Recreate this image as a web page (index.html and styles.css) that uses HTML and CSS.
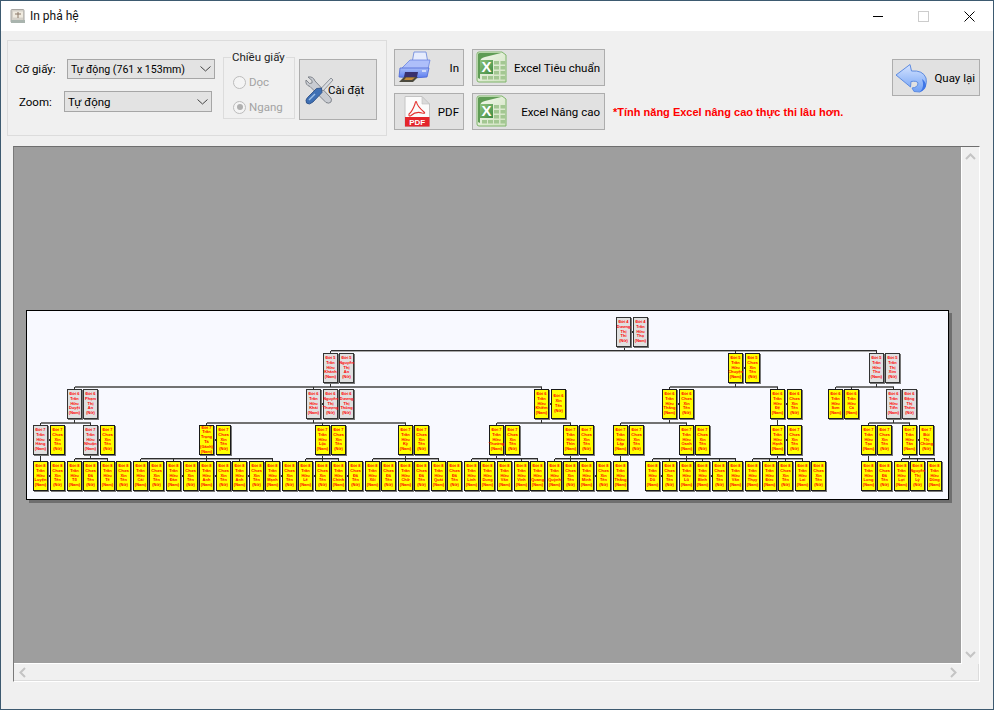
FILE: index.html
```html
<!DOCTYPE html>
<html lang="vi">
<head>
<meta charset="utf-8">
<title>In phả hệ</title>
<link rel="stylesheet" href="styles.css">
</head>
<body>
<svg class="defs" width="0" height="0">
<defs>
<linearGradient id="xl" x1="0" y1="0" x2="1" y2="1"><stop offset="0" stop-color="#f2f7ec"/><stop offset="1" stop-color="#cfe2bf"/></linearGradient>
<linearGradient id="xg" x1="0" y1="0" x2="1" y2="1"><stop offset="0" stop-color="#8cc27c"/><stop offset="1" stop-color="#3f8a42"/></linearGradient>
<linearGradient id="ar" x1="0" y1="0" x2="0" y2="1"><stop offset="0" stop-color="#d6e4ff"/><stop offset="1" stop-color="#6fa0f5"/></linearGradient>
<linearGradient id="pr" x1="0" y1="0" x2="0" y2="1"><stop offset="0" stop-color="#a7bcf8"/><stop offset="1" stop-color="#5a7cf0"/></linearGradient>
<symbol id="excel" viewBox="0 0 32 33">
<path d="M3 1H26L30 4V31H3Q1 31 1 29V3Q1 1 3 1Z" fill="url(#xl)" stroke="#7fb56b"/>
<path d="M2 3Q2 2 4 2H25L9 6Q4 7 4 11V28L2 27Z" fill="#5f9c55"/>
<rect x="4" y="9" width="13" height="14" fill="url(#xg)"/>
<text x="10.5" y="21" class="xl-x">X</text>
<g fill="#a3c792"><rect x="18" y="10" width="5" height="3.5"/><rect x="24.500" y="10" width="5" height="3.500"/><rect x="18" y="15" width="5" height="3.500"/><rect x="24.500" y="15" width="5" height="3.500"/><rect x="18" y="20" width="5" height="3.500"/><rect x="24.500" y="20" width="5" height="3.500"/><rect x="6" y="25" width="5" height="3.500"/><rect x="12" y="25" width="5" height="3.500"/><rect x="18" y="25" width="5" height="3.500"/><rect x="24.500" y="25" width="5" height="3.500"/></g>
</symbol>
</defs>
</svg>
<div class="window">
  <header class="titlebar">
    <svg class="app-icon" viewBox="0 0 16 16" width="16" height="16"><rect x="1" y="1.500" width="13" height="13" rx="1" fill="#d4d0c8" stroke="#a8a6a2"/><rect x="3" y="3.500" width="10" height="6" fill="#efeadf"/><path d="M8 4V10M5 6H11" stroke="#8b7868"/><path d="M1 12H15V15H1Z" fill="#a9b4ae"/></svg>
    <span class="title">In phả hệ</span>
    <div class="winbtns">
      <svg width="10" height="10" viewBox="0 0 10 10" class="wb wb-min"><path d="M0 5.500H10" stroke="#000"/></svg>
      <svg width="11" height="11" viewBox="0 0 11 11" class="wb wb-max"><rect x=".5" y=".5" width="10" height="10" fill="none" stroke="#ccc"/></svg>
      <svg width="11" height="11" viewBox="0 0 11 11" class="wb wb-close"><path d="M.5 .5L10.500 10.500M10.500 .5L.5 10.500" stroke="#000" fill="none"/></svg>
    </div>
  </header>

  <section class="toolbar">
    <div class="panel">
      <div class="fields">
        <div class="field field-size"><label class="flabel">Cỡ giấy:</label><div class="combo"><span class="combo-size-text">Tự động (761 x 153mm)</span><svg class="chev" width="11" height="6" viewBox="0 0 11 6"><path d="M.5 .5L5.500 5L10.500 .5" fill="none" stroke="#444"/></svg></div></div>
        <div class="field field-zoom"><label class="flabel">Zoom:</label><div class="combo combo-zoom"><span>Tự động</span><svg class="chev" width="11" height="6" viewBox="0 0 11 6"><path d="M.5 .5L5.500 5L10.500 .5" fill="none" stroke="#444"/></svg></div></div>
      </div>
      <div class="groupbox">
        <span class="legend">Chiều giấy</span>
        <div class="radio r-doc"><i class="dot"></i>Dọc</div>
        <div class="radio r-ngang"><i class="dot on"></i>Ngang</div>
      </div>
      <button class="btn btn-setup">
        <svg class="ico-tools" width="30" height="30" viewBox="0 0 30 30">
          <path d="M4 2L8 5.500L8 8L5.500 8.500L2 5Q1 10 6 11.500L22 27.500Q25 29 27 27Q28.500 24 26 22L11 6Q9 1 4 2Z" fill="#c9ccd2" stroke="#6d727a" stroke-width=".8"/>
          <path d="M27 3L29 5L19 16L16.500 14Z" fill="#d9dce0" stroke="#7a7f86" stroke-width=".8"/>
          <path d="M17.500 13L18 17.500L9 27Q5 30.500 2.500 28Q1 25 3.500 22.500L12.500 13.500Z" fill="#3f70b4" stroke="#274a80" stroke-width=".8"/>
          <path d="M5 25L11 19" stroke="#9cbfe8" stroke-width="1.400"/>
        </svg>
        <span class="setup-text">Cài đặt</span>
      </button>
    </div>

    <div class="actions">
      <button class="btn btn-act">
        <svg class="ico-printer" width="34" height="34" viewBox="0 0 34 34">
          <path d="M16 1H28L30 12H14Z" fill="#e6ecfd" stroke="#7f97e0"/>
          <path d="M5 16L12 9H32L30 18H3Z" fill="#aebffa" stroke="#6a84e0" stroke-width=".8"/>
          <path d="M2 17H31L29 26Q15 28 1 26Z" fill="url(#pr)" stroke="#4a66d4" stroke-width=".8"/>
          <path d="M7 21H20L19 26H6Z" fill="#39306e"/>
          <path d="M6 26H20L15 31H1Z" fill="#4c4a3e"/>
          <path d="M8 26.500H17L14 29H6Z" fill="#c58a3a"/>
          <path d="M24 20H28" stroke="#e6ecfd" stroke-width="1.500"/>
        </svg>
        <span class="lbl">In</span>
      </button>
      <button class="btn btn-act">
        <svg class="ico-excel" width="32" height="33"><use href="#excel"/></svg>
        <span class="lbl">Excel Tiêu chuẩn</span>
      </button>
      <button class="btn btn-act">
        <svg class="ico-pdf" width="26" height="31" viewBox="0 0 26 31">
          <path d="M1 .5H18L25.500 8V30.500H1Z" fill="#fbfbfb" stroke="#c4c4c4"/>
          <path d="M18 .5V8H25.500Z" fill="#dadada" stroke="#bdbdbd" stroke-width=".6"/>
          <path d="M5 18Q8 16 11 8Q11.500 4.500 12.500 6Q13 10 20 16Q22 18 18 17Q12 15 7 19.500Q4.500 21 5 18Z" fill="none" stroke="#e3322f" stroke-width="1.100"/>
          <rect x="1" y="21" width="24.500" height="9.500" fill="#e4252b"/>
          <text x="13.200" y="29" class="pdf-t">PDF</text>
        </svg>
        <span class="lbl">PDF</span>
      </button>
      <button class="btn btn-act">
        <svg class="ico-excel" width="32" height="33"><use href="#excel"/></svg>
        <span class="lbl">Excel Nâng cao</span>
      </button>
    </div>

    <p class="note">*Tính năng Excel nâng cao thực thi lâu hơn.</p>

    <button class="btn btn-back">
      <svg class="ico-back" width="33" height="30" viewBox="0 0 33 30">
        <path d="M1 12L15 1.500L16.500 8Q28 7 31 15Q33 24 25 29L19 28.500L17 25Q23 24.500 23 20Q22 17.500 16 18.500L15.500 24Z" fill="url(#ar)" stroke="#5f8ce0"/>
        <path d="M25 29Q30 24 27 16Q31 19 31 23Q30 27 25 29Z" fill="#3f76e6"/>
      </svg>
      <span class="lbl">Quay lại</span>
    </button>
  </section>

  <section class="viewer">
    <div class="stage">
      <div class="paper">
        <svg class="lines" width="921" height="188" viewBox="0 0 921 188">
          <path class="bus-shadow" d="M303.500 40.500H849.500M47.500 148.500H80.500M113.500 148.500H245.500M278.500 148.500H311.500M345.500 148.500H411.500M444.500 148.500H510.500M527.500 148.500H559.500M625.500 148.500H708.500M725.500 148.500H775.500M874.500 148.500H907.500"/>
          <path class="bus-soft" d="M47.500 76H514.500M642.500 76H750.500M808.500 76H866.500M13.500 112H63.500M179.500 112H378.500M469.500 112H543.500M593.500 112H659.500M841.500 112H882.500"/>
          <path class="bus" d="M597.500 36V39.500M303.500 39.500H849.500M303.500 39.500V42M708.500 39.500V42M849.500 39.500V42
          M303.500 72V75.500M47.500 75.500V78M286.500 75.500V78M514.500 75.500V78
          M708.500 72V75.500M642.500 75.500V78M750.500 75.500V78
          M849.500 72V75.500M808.500 75.500V78M824.500 75.500V78M866.500 75.500V78
          M47.500 108V111.500M13.500 111.500V114M63.500 111.500V114
          M286.500 108V111.500M179.500 111.500V114M295.500 111.500V114M378.500 111.500V114
          M514.500 108V111.500M469.500 111.500V114M543.500 111.500V114
          M642.500 108V111.500M593.500 111.500V114M659.500 111.500V114
          M750.500 108V114
          M866.500 108V111.500M841.500 111.500V114M882.500 111.500V114
          M13.500 144V150
          M63.500 144V147.500M47.500 147.500H80.500M47.500 147.500V150M80.500 147.500V150
          M179.500 144V147.500M113.500 147.500H245.500M113.500 147.500V150M146.500 147.500V150M179.500 147.500V150M212.500 147.500V150M245.500 147.500V150
          M295.500 144V147.500M278.500 147.500H311.500M278.500 147.500V150M295.500 147.500V150M311.500 147.500V150
          M378.500 144V147.500M345.500 147.500H411.500M345.500 147.500V150M378.500 147.500V150M411.500 147.500V150
          M469.500 144V147.500M444.500 147.500H510.500M444.500 147.500V150M460.500 147.500V150M477.500 147.500V150M494.500 147.500V150M510.500 147.500V150
          M543.500 144V147.500M527.500 147.500H559.500M527.500 147.500V150M543.500 147.500V150M559.500 147.500V150
          M593.500 144V150
          M659.500 144V147.500M625.500 147.500H708.500M625.500 147.500V150M642.500 147.500V150M659.500 147.500V150M675.500 147.500V150M692.500 147.500V150M708.500 147.500V150
          M750.500 144V147.500M725.500 147.500H775.500M725.500 147.500V150M742.500 147.500V150M758.500 147.500V150M775.500 147.500V150
          M841.500 144V150
          M882.500 144V147.500M874.500 147.500H907.500M874.500 147.500V150M890.500 147.500V150M907.500 147.500V150"/>
          <path class="tie" d="M604 21H606
          M311 57H312M716 57H718M857 57H858
          M55 93H56M294 93H296M311 93H312M522 93H524M650 93H652M758 93H760M874 93H875
          M21 129H23M71 129H73M187 129H189M303 129H304M386 129H387M477 129H478M551 129H552M601 129H602M667 129H668M758 129H760M849 129H850M890 129H892
          M21 165H23M55 165H56M88 165H89M121 165H122M154 165H156M187 165H189M220 165H222M253 165H255M286 165H288M319 165H321M353 165H354M386 165H387M419 165H420M535 165H536M567 165H569M633 165H635M683 165H685M750 165H751M783 165H784M849 165H850M882 165H883"/>
        </svg>
        <div class="n g r0" style="left:589px">Đời 4<br>Dương<br>Thị<br>Thi<br>(Nữ)</div>
        <div class="n g r0" style="left:606px">Đời 4<br>Trần<br>Hữu<br>Thọ<br>(Nam)</div>

        <div class="n g r1" style="left:296px">Đời 5<br>Trần<br>Hữu<br>Khánh<br>(Nam)</div>
        <div class="n g r1" style="left:312px">Đời 5<br>Nguyễn<br>Thị<br>An<br>(Nữ)</div>
        <div class="n y r1" style="left:701px">Đời 5<br>Trần<br>Hữu<br>Chuyện<br>(Nam)</div>
        <div class="n y r1" style="left:718px">Đời 5<br>Chưa<br>Xin<br>Tên<br>(Nữ)</div>
        <div class="n g r1" style="left:842px">Đời 5<br>Trần<br>Hữu<br>Thu<br>(Nam)</div>
        <div class="n g r1" style="left:858px">Đời 5<br>Trần<br>Thị<br>Xim<br>(Nữ)</div>

        <div class="n g r2" style="left:40px">Đời 6<br>Trần<br>Hữu<br>Duyệt<br>(Nam)</div>
        <div class="n g r2" style="left:56px">Đời 6<br>Phạm<br>Thị<br>An<br>(Nữ)</div>
        <div class="n g r2" style="left:279px">Đời 6<br>Trần<br>Hữu<br>Khải<br>(Nam)</div>
        <div class="n g r2" style="left:296px">Đời 6<br>Nguyễn<br>Thị<br>Thượng<br>(Nữ)</div>
        <div class="n g r2" style="left:312px">Đời 6<br>Dương<br>Thị<br>Thông<br>(Nữ)</div>
        <div class="n y r2" style="left:507px">Đời 6<br>Trần<br>Hữu<br>Khiêm<br>(Nam)</div>
        <div class="n y r2" style="left:524px">Đời 6<br>Xin<br>Tên<br>(Nữ)</div>
        <div class="n y r2" style="left:635px">Đời 6<br>Trần<br>Hữu<br>Thắng<br>(Nam)</div>
        <div class="n y r2" style="left:652px">Đời 6<br>Chưa<br>Xin<br>Tên<br>(Nữ)</div>
        <div class="n y r2" style="left:743px">Đời 6<br>Trần<br>Hữu<br>Đệ<br>(Nam)</div>
        <div class="n y r2" style="left:760px">Đời 6<br>Chưa<br>Xin<br>Tên<br>(Nữ)</div>
        <div class="n y r2" style="left:801px">Đời 6<br>Trần<br>Hữu<br>Sơn<br>(Nam)</div>
        <div class="n y r2" style="left:817px">Đời 6<br>Trần<br>Hữu<br>Cả<br>(Nam)</div>
        <div class="n g r2" style="left:859px">Đời 6<br>Trần<br>Hữu<br>Tiến<br>(Nam)</div>
        <div class="n g r2" style="left:875px">Đời 6<br>Đặng<br>Thị<br>Thêm<br>(Nữ)</div>

        <div class="n g r3" style="left:6px">Đời 7<br>Trần<br>Hữu<br>Hàng<br>(Nam)</div>
        <div class="n y r3" style="left:23px">Đời 7<br>Chưa<br>Xin<br>Tên<br>(Nữ)</div>
        <div class="n g r3" style="left:56px">Đời 7<br>Trần<br>Hữu<br>Nhuận<br>(Nam)</div>
        <div class="n y r3" style="left:73px">Đời 7<br>Chưa<br>Xin<br>Tên<br>(Nữ)</div>
        <div class="n y r3" style="left:172px">Đời 7<br>Trần<br>Trọng<br>Tá<br>(Gánh)<br>(Nam)</div>
        <div class="n y r3" style="left:189px">Đời 7<br>Chưa<br>Xin<br>Tên<br>(Nữ)</div>
        <div class="n y r3" style="left:288px">Đời 7<br>Trần<br>Hữu<br>Lộc<br>(Nam)</div>
        <div class="n y r3" style="left:304px">Đời 7<br>Chưa<br>Xin<br>Tên<br>(Nữ)</div>
        <div class="n y r3" style="left:371px">Đời 7<br>Trần<br>Hữu<br>Kỳ<br>(Nam)</div>
        <div class="n y r3" style="left:387px">Đời 7<br>Chưa<br>Xin<br>Tên<br>(Nữ)</div>
        <div class="n y r3" style="left:462px">Đời 7<br>Trần<br>Hữu<br>Thưởng<br>(Nam)</div>
        <div class="n y r3" style="left:478px">Đời 7<br>Chưa<br>Xin<br>Tên<br>(Nữ)</div>
        <div class="n y r3" style="left:536px">Đời 7<br>Trần<br>Hữu<br>Thìn<br>(Nam)</div>
        <div class="n y r3" style="left:552px">Đời 7<br>Chưa<br>Xin<br>Tên<br>(Nữ)</div>
        <div class="n y r3" style="left:586px">Đời 7<br>Trần<br>Hữu<br>Lập<br>(Nam)</div>
        <div class="n y r3" style="left:602px">Đời 7<br>Chưa<br>Xin<br>Tên<br>(Nữ)</div>
        <div class="n y r3" style="left:652px">Đời 7<br>Trần<br>Hữu<br>Oanh<br>(Nam)</div>
        <div class="n y r3" style="left:668px">Đời 7<br>Chưa<br>Xin<br>Tên<br>(Nữ)</div>
        <div class="n y r3" style="left:743px">Đời 7<br>Trần<br>Hữu<br>Hạnh<br>(Nam)</div>
        <div class="n y r3" style="left:760px">Đời 7<br>Chưa<br>Xin<br>Tên<br>(Nữ)</div>
        <div class="n y r3" style="left:834px">Đời 7<br>Trần<br>Hữu<br>Tạo<br>(Nam)</div>
        <div class="n y r3" style="left:850px">Đời 7<br>Chưa<br>Xin<br>Tên<br>(Nữ)</div>
        <div class="n y r3" style="left:875px">Đời 7<br>Trần<br>Hữu<br>Tân<br>(Nam)</div>
        <div class="n y r3" style="left:892px">Đời 7<br>Bùi<br>Thị<br>Chúng<br>(Nữ)</div>

        <div class="n y r4" style="left:6px">Đời 8<br>Trần<br>Hữu<br>Luyện<br>(Nam)</div>
        <div class="n y r4" style="left:23px">Đời 8<br>Chưa<br>Xin<br>Tên<br>(Nữ)</div>
        <div class="n y r4" style="left:40px">Đời 8<br>Trần<br>Hữu<br>Tố<br>(Nam)</div>
        <div class="n y r4" style="left:56px">Đời 8<br>Chưa<br>Đã<br>Tên<br>(Nữ)</div>
        <div class="n y r4" style="left:73px">Đời 8<br>Trần<br>Hữu<br>Tê<br>(Nam)</div>
        <div class="n y r4" style="left:89px">Đời 8<br>Chưa<br>Xin<br>Tên<br>(Nữ)</div>
        <div class="n y r4" style="left:106px">Đời 8<br>Trần<br>Hữu<br>Cải<br>(Nam)</div>
        <div class="n y r4" style="left:122px">Đời 8<br>Chưa<br>Xin<br>Tên<br>(Nữ)</div>
        <div class="n y r4" style="left:139px">Đời 8<br>Trần<br>Hữu<br>Đàn<br>(Nam)</div>
        <div class="n y r4" style="left:156px">Đời 8<br>Chưa<br>Xin<br>Tên<br>(Nữ)</div>
        <div class="n y r4" style="left:172px">Đời 8<br>Trần<br>Hữu<br>Anh<br>(Nam)</div>
        <div class="n y r4" style="left:189px">Đời 8<br>Chưa<br>Xin<br>Tên<br>(Nữ)</div>
        <div class="n y r4" style="left:205px">Đời 8<br>Trần<br>Hữu<br>Anh<br>(Nam)</div>
        <div class="n y r4" style="left:222px">Đời 8<br>Chưa<br>Xin<br>Tên<br>(Nữ)</div>
        <div class="n y r4" style="left:238px">Đời 8<br>Trần<br>Hữu<br>Mạnh<br>(Nam)</div>
        <div class="n y r4" style="left:255px">Đời 8<br>Chưa<br>Xin<br>Tên<br>(Nữ)</div>
        <div class="n y r4" style="left:271px">Đời 8<br>Trần<br>Hữu<br>Lê<br>(Nam)</div>
        <div class="n y r4" style="left:288px">Đời 8<br>Chưa<br>Xin<br>Tên<br>(Nữ)</div>
        <div class="n y r4" style="left:304px">Đời 8<br>Trần<br>Hữu<br>Chính<br>(Nam)</div>
        <div class="n y r4" style="left:321px">Đời 8<br>Chưa<br>Đã<br>Tên<br>(Nữ)</div>
        <div class="n y r4" style="left:338px">Đời 8<br>Trần<br>Hữu<br>Xồi<br>(Nam)</div>
        <div class="n y r4" style="left:354px">Đời 8<br>Chưa<br>Đã<br>Tên<br>(Nữ)</div>
        <div class="n y r4" style="left:371px">Đời 8<br>Trần<br>Hữu<br>Chữ<br>(Nam)</div>
        <div class="n y r4" style="left:387px">Đời 8<br>Chưa<br>Đã<br>Tên<br>(Nữ)</div>
        <div class="n y r4" style="left:404px">Đời 8<br>Trần<br>Hữu<br>Quát<br>(Nam)</div>
        <div class="n y r4" style="left:420px">Đời 8<br>Chưa<br>Đã<br>Tên<br>(Nữ)</div>
        <div class="n y r4" style="left:437px">Đời 8<br>Trần<br>Hữu<br>Linh<br>(Nam)</div>
        <div class="n y r4" style="left:453px">Đời 8<br>Trần<br>Hữu<br>Dung<br>(Nam)</div>
        <div class="n y r4" style="left:470px">Đời 8<br>Trần<br>Hữu<br>Vân<br>(Nam)</div>
        <div class="n y r4" style="left:487px">Đời 8<br>Trần<br>Hữu<br>Vinh<br>(Nam)</div>
        <div class="n y r4" style="left:503px">Đời 8<br>Trần<br>Hữu<br>Quang<br>(Nam)</div>
        <div class="n y r4" style="left:520px">Đời 8<br>Trần<br>Hữu<br>Quỳnh<br>(Nam)</div>
        <div class="n y r4" style="left:536px">Đời 8<br>Chưa<br>Xin<br>Tên<br>(Nữ)</div>
        <div class="n y r4" style="left:552px">Đời 8<br>Trần<br>Hữu<br>Minh<br>(Nam)</div>
        <div class="n y r4" style="left:569px">Đời 8<br>Chưa<br>Xin<br>Tên<br>(Nữ)</div>
        <div class="n y r4" style="left:586px">Đời 8<br>Trần<br>Hữu<br>Thắng<br>(Nam)</div>
        <div class="n y r4" style="left:618px">Đời 8<br>Trần<br>Hữu<br>Dũ<br>(Nam)</div>
        <div class="n y r4" style="left:635px">Đời 8<br>Chưa<br>Xin<br>Tên<br>(Nữ)</div>
        <div class="n y r4" style="left:652px">Đời 8<br>Trần<br>Hữu<br>Lũ<br>(Nam)</div>
        <div class="n y r4" style="left:668px">Đời 8<br>Trần<br>Hữu<br>Bình<br>(Nam)</div>
        <div class="n y r4" style="left:685px">Đời 8<br>Chưa<br>Xin<br>Tên<br>(Nữ)</div>
        <div class="n y r4" style="left:701px">Đời 8<br>Trần<br>Hữu<br>Văn<br>(Nam)</div>
        <div class="n y r4" style="left:718px">Đời 8<br>Trần<br>Hữu<br>Thụy<br>(Nam)</div>
        <div class="n y r4" style="left:735px">Đời 8<br>Trần<br>Hữu<br>Đức<br>(Nam)</div>
        <div class="n y r4" style="left:751px">Đời 8<br>Chưa<br>Xin<br>Tên<br>(Nữ)</div>
        <div class="n y r4" style="left:768px">Đời 8<br>Trần<br>Hữu<br>Lai<br>(Nam)</div>
        <div class="n y r4" style="left:784px">Đời 8<br>Chưa<br>Xin<br>Tên<br>(Nữ)</div>
        <div class="n y r4" style="left:834px">Đời 8<br>Trần<br>Hữu<br>Long<br>(Nam)</div>
        <div class="n y r4" style="left:850px">Đời 8<br>Chưa<br>Đã<br>Tên<br>(Nữ)</div>
        <div class="n y r4" style="left:867px">Đời 8<br>Trần<br>Hữu<br>Lợi<br>(Nam)</div>
        <div class="n y r4" style="left:883px">Đời 8<br>Nguyễn<br>Thị<br>Lý<br>(Nữ)</div>
        <div class="n y r4" style="left:900px">Đời 8<br>Trần<br>Hữu<br>Dũng<br>(Nam)</div>
      </div>
    </div>
    <div class="vbar">
      <svg width="11" height="7" viewBox="0 0 11 7"><path d="M1 6L5.500 1.500L10 6" fill="none" stroke="#c4c4c4" stroke-width="2"/></svg>
      <svg width="11" height="7" viewBox="0 0 11 7"><path d="M1 1L5.500 5.500L10 1" fill="none" stroke="#c4c4c4" stroke-width="2"/></svg>
    </div>
    <div class="hbar">
      <svg width="7" height="11" viewBox="0 0 7 11"><path d="M6 1L1.500 5.500L6 10" fill="none" stroke="#c4c4c4" stroke-width="2"/></svg>
      <svg width="7" height="11" viewBox="0 0 7 11"><path d="M1 1L5.500 5.500L1 10" fill="none" stroke="#c4c4c4" stroke-width="2"/></svg>
    </div>
    <div class="corner"></div>
  </section>
</div>
</body>
</html>
```
FILE: styles.css
```css
* { box-sizing: border-box; }
html, body { margin: 0; padding: 0; }
body { width: 994px; height: 710px; overflow: hidden; font-family: Roboto, "Noto Sans", sans-serif; font-size: 11.5px; color: #000; }
.defs { position: absolute; }
.window { width: 994px; height: 710px; border: 1px solid #3d5a70; background: #f0f0f0; display: flex; flex-direction: column; }

.titlebar { height: 30px; background: #fff; display: flex; align-items: center; padding-left: 9px; flex: none; }
.app-icon { flex: none; }
.title { margin-left: 4px; color: #111; font-size: 12px; }
.winbtns { margin-left: auto; display: flex; align-items: center; }
.wb { flex: none; display: block; }
.wb-min { margin-right: 35px; }
.wb-max { margin-right: 35px; }
.wb-close { margin-right: 18px; }

.toolbar { height: 115px; flex: none; display: flex; align-items: flex-start; padding: 9px 0 0 6px; }
.panel { width: 380px; height: 96px; border: 1px solid #dcdcdc; display: flex; flex: none; }
.fields { width: 207px; flex: none; padding-top: 18px; display: flex; flex-direction: column; gap: 12px; }
.field { display: flex; align-items: center; }
.field-size { margin-left: 7px; }
.field-zoom { margin-left: 11px; }
.field-size .flabel { width: 52px; }
.field-zoom .flabel { width: 45px; }
.combo { width: 148px; height: 20px; background: #e3e3e3; border: 1px solid #a6a6a6; display: flex; align-items: center; justify-content: space-between; padding: 0 3px 0 3px; white-space: nowrap; }
.combo-size-text { font-size: 10.6px; }
.combo-zoom { height: 21px; }
.chev { flex: none; }

.groupbox { position: relative; width: 72px; height: 62px; margin: 16px 0 0 8px; border: 1px solid #dcdcdc; flex: none; }
.legend { position: absolute; left: 7px; top: -8px; background: #f0f0f0; padding: 0 1px; white-space: nowrap; color: #222; }
.radio { display: flex; align-items: center; color: #a3a3a3; gap: 3px; padding-left: 9px; }
.r-doc { margin-top: 17px; }
.r-ngang { margin-top: 11px; }
.dot { width: 13px; height: 13px; border-radius: 50%; border: 1px solid #bcbcbc; background: #f4f4f4; display: block; position: relative; flex: none; }
.dot.on::after { content: ""; position: absolute; left: 2.5px; top: 2.5px; width: 6px; height: 6px; border-radius: 50%; background: #b0b0b0; }

.btn { font: inherit; color: #000; background: #e1e1e1; border: 1px solid #adadad; display: flex; align-items: center; padding: 0; }
.btn-setup { width: 78px; height: 61px; margin: 18px 0 0 4px; flex: none; padding-left: 4px; }
.ico-tools { flex: none; }
.setup-text { margin-left: -6px; }

.actions { display: grid; grid-template-columns: 70px 133px; grid-auto-rows: 37px; gap: 7px 8px; margin: 9px 0 0 7px; flex: none; }
.btn-act { justify-content: space-between; padding: 0 4px 0 3px; }
.lbl { white-space: nowrap; }
.ico-printer { flex: none; }
.ico-excel { flex: none; }
.ico-pdf { margin-left: 6px; flex: none; }
.xl-x { font: bold 15px "Liberation Sans", sans-serif; fill: #fff; text-anchor: middle; }
.pdf-t { font: bold 8px "Liberation Sans", sans-serif; fill: #fff; text-anchor: middle; }

.note { margin: 66px 0 0 8px; font: bold 11px/13px "Liberation Sans", sans-serif; color: #f00; white-space: nowrap; }
.btn-back { width: 88px; height: 37px; margin: 19px 13px 0 auto; flex: none; justify-content: space-between; padding: 0 4px 0 2px; }
.ico-back { flex: none; }

.viewer { flex: 1; margin: 0 13px 27px 12px; display: grid; grid-template-columns: 1fr 17px; grid-template-rows: 1fr 17px; border-top: 1px solid #6e6e6e; border-left: 1px solid #7a7a7a; border-right: 1px solid #fff; border-bottom: 1px solid #fff; min-height: 0; }
.stage { background: #9e9e9e; border-right: 1px solid #fff; border-bottom: 1px solid #fff; display: flex; align-items: center; padding-left: 12px; min-width: 0; min-height: 0; overflow: hidden; }
.paper { position: relative; width: 923px; height: 190px; flex: none; background: #f8f9ff; border: 1px solid #000; box-shadow: 3px 3px 0 #6e6e6e; }
.lines { position: absolute; left: 0; top: 0; }
.bus { fill: none; stroke: #2e2e2e; stroke-width: 1; shape-rendering: crispEdges; }
.bus-soft { fill: none; stroke: #727272; stroke-width: 2; shape-rendering: crispEdges; }
.bus-shadow { fill: none; stroke: #a8a8a8; stroke-width: 1; shape-rendering: crispEdges; }
.tie { fill: none; stroke: #333; stroke-width: 2; shape-rendering: crispEdges; }
.vbar { display: flex; flex-direction: column; justify-content: space-between; align-items: center; padding: 6px 0 6px; background: #f0f0f0; }
.hbar { display: flex; justify-content: space-between; align-items: center; padding: 0 5px 0 5px; background: #f0f0f0; border-bottom: 1px solid #dcdcdc; }
.corner { background: #f0f0f0; border-bottom: 1px solid #dcdcdc; border-right: 1px solid #dcdcdc; }

.n { position: absolute; width: 15px; height: 30px; border: 1px solid #1a1a1a; box-shadow: 1px 1px 0 #777; display: grid; align-content: center; text-align: center; font: bold 4px/4.8px "Liberation Sans", sans-serif; color: #f00; white-space: nowrap; overflow: visible; justify-content: center; }
.y { background: #ff0; }
.g { background: #e0e0e0; border-color: #333; }
.r0 { top: 6px; }
.r1 { top: 42px; }
.r2 { top: 78px; }
.r3 { top: 114px; }
.r4 { top: 150px; }
```
